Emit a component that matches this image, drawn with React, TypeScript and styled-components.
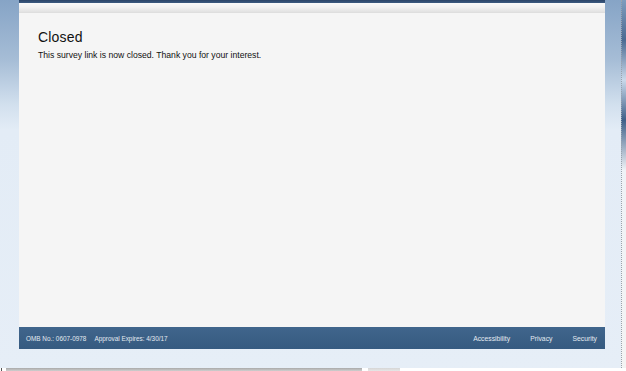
import React from "react";
import styled, { createGlobalStyle } from "styled-components";

const Global = createGlobalStyle`
  html, body { margin: 0; padding: 0; background: #e6eef7; }
  body { font-family: "Liberation Sans", Arial, sans-serif; }
`;

const Page = styled.div`
  width: 626px;
  height: 371px;
  display: flex;
  flex-direction: column;
  overflow: hidden;
`;

const TopArea = styled.div`
  flex: 1;
  display: flex;
  min-height: 0;
`;

const Desktop = styled.div`
  flex: 1;
  display: flex;
  flex-direction: column;
  padding: 0 16px 0 19px;
  background: linear-gradient(
    to bottom,
    #86a4c6 0px,
    #a6bdd6 60px,
    #d2e0ee 105px,
    #e3ecf6 130px,
    #e6eef7 371px
  );
`;

const SideStrip = styled.div`
  width: 4px;
  background: linear-gradient(
    to bottom,
    #7f9cbd 0px,
    #4a6a92 40px,
    #c9d9ea 80px,
    #3f5f88 120px,
    #eef2f6 170px,
    #f4f4f4 371px
  );
  border-left: 1px dotted #9aa3ad;
`;

const Panel = styled.div`
  height: 349px;
  display: flex;
  flex-direction: column;
  background: #f5f5f5;
`;

const NavBar = styled.div`
  height: 3px;
  background: linear-gradient(to bottom, #2a4468, #3c5a80);
`;

const Band = styled.div`
  height: 9px;
  background: linear-gradient(to bottom, #fafafa, #f1f1f1 50%, #e1e1e1);
  border-bottom: 1px solid #dedede;
`;

const Content = styled.div`
  flex: 1;
  padding: 15px 19px 0;
  color: #111;
`;

const Heading = styled.h1`
  margin: 0 0 4px;
  font-family: "Liberation Sans", Arial, sans-serif;
  font-weight: normal;
  font-size: 14px;
  letter-spacing: 0.2px;
  line-height: 18px;
  color: #111;
`;

const Message = styled.p`
  margin: 0;
  font-size: 8.65px;
  line-height: 11px;
  color: #111;
`;

const Footer = styled.footer`
  height: 22px;
  display: flex;
  align-items: center;
  padding: 0 8px 0 7px;
  background: linear-gradient(to bottom, #40658c, #355a80);
  color: #e4eaf1;
  font-size: 6.8px;
`;

const FooterLeft = styled.div`
  display: flex;
  gap: 8px;
  flex: 1;
  font-size: 6.4px;
`;

const FooterRight = styled.nav`
  display: flex;
  gap: 20px;
`;

const FooterLink = styled.span`
  color: #e4eaf1;
`;

const BottomRow = styled.div`
  height: 3px;
  display: flex;
  align-items: stretch;
  background: #ffffff;
`;

const Tick = styled.div`
  width: 1px;
  margin-left: 1px;
  background: #555;
`;

const GrayBar = styled.div<{ $w: number; $ml: number; $light?: boolean }>`
  width: ${(p) => p.$w}px;
  margin-left: ${(p) => p.$ml}px;
  background: ${(p) =>
    p.$light
      ? "linear-gradient(to bottom, #d6d6d6, #e6e6e6)"
      : "linear-gradient(to bottom, #a9a9a9, #cfcfcf)"};
`;

export default function App() {
  return (
    <>
      <Global />
      <Page>
        <TopArea>
          <Desktop>
            <Panel>
              <NavBar />
              <Band />
              <Content>
                <Heading>Closed</Heading>
                <Message>This survey link is now closed. Thank you for your interest.</Message>
              </Content>
              <Footer>
                <FooterLeft>
                  <span>OMB No.: 0607-0978</span>
                  <span>Approval Expires: 4/30/17</span>
                </FooterLeft>
                <FooterRight>
                  <FooterLink>Accessibility</FooterLink>
                  <FooterLink>Privacy</FooterLink>
                  <FooterLink>Security</FooterLink>
                </FooterRight>
              </Footer>
            </Panel>
          </Desktop>
          <SideStrip />
        </TopArea>
        <BottomRow>
          <Tick />
          <GrayBar $w={356} $ml={4} />
          <GrayBar $w={32} $ml={6} $light />
        </BottomRow>
      </Page>
    </>
  );
}
